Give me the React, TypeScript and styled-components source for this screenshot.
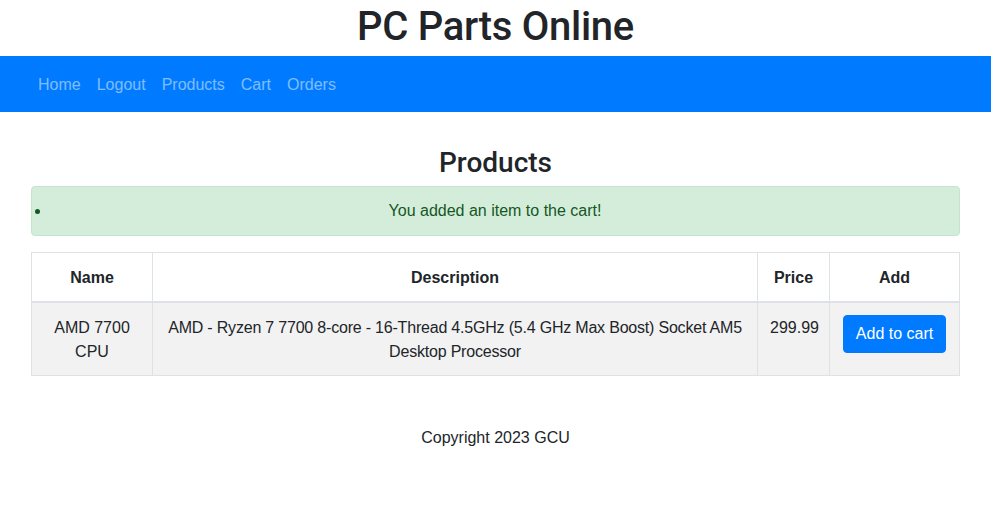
import React from "react";
import styled, { createGlobalStyle } from "styled-components";

const Global = createGlobalStyle`
  html, body { margin: 0; padding: 0; background: #fff; }
  body {
    font-family: "Liberation Sans", Arial, sans-serif;
    font-size: 16px;
    line-height: 1.5;
    color: #212529;
  }
  * { box-sizing: border-box; }
`;

const Page = styled.div`
  display: flex;
  flex-direction: column;
`;

const SiteTitle = styled.h1`
  margin: 0 0 5px;
  padding-top: 3px;
  font-family: Roboto, "Liberation Sans", sans-serif;
  font-size: 40px;
  font-weight: 500;
  line-height: 48px;
  letter-spacing: -0.3px;
  text-align: center;
`;

const NavBar = styled.nav`
  background: #007bff;
  height: 56px;
  display: flex;
  align-items: center;
  padding: 2px 23px 0 30px;
`;

const NavLink = styled.a`
  color: rgba(255, 255, 255, 0.5);
  text-decoration: none;
  padding: 8px;
  line-height: 24px;
`;

const Main = styled.main`
  padding: 34px 31px 0;
  display: flex;
  flex-direction: column;
`;

const Heading = styled.h2`
  margin: 0 0 6px;
  font-family: Roboto, "Liberation Sans", sans-serif;
  font-size: 28px;
  font-weight: 500;
  line-height: 34px;
  text-align: center;
`;

const Alert = styled.div`
  background: #d4edda;
  border: 1px solid #c3e6cb;
  color: #155724;
  border-radius: 4px;
  padding: 12px 20px;
  margin-bottom: 16px;
`;

const AlertList = styled.ul`
  margin: 0;
  padding: 0;
  list-style: disc outside;
`;

const AlertItem = styled.li`
  text-align: center;
  margin-left: -1px;
`;

const Table = styled.table`
  width: 100%;
  border-collapse: collapse;
  table-layout: fixed;
  margin-bottom: 16px;
`;

const Th = styled.th`
  border: 1px solid #dee2e6;
  border-bottom-width: 2px;
  padding: 13px 12px 11px;
  font-weight: 700;
  text-align: center;
  vertical-align: bottom;
`;

const Row = styled.tr`
  background: #f2f2f2;
`;

const Td = styled.td<{ $tight?: boolean }>`
  border: 1px solid #dee2e6;
  padding: 13px 12px 11px;
  text-align: center;
  vertical-align: top;
  letter-spacing: ${(p) => (p.$tight ? "-0.2px" : "normal")};
`;

const Button = styled.button`
  font-family: inherit;
  font-size: 16px;
  line-height: 24px;
  padding: 6px 12px;
  margin-top: -1px;
  color: #fff;
  background: #007bff;
  border: 1px solid #007bff;
  border-radius: 4px;
  cursor: pointer;
`;

const Footer = styled.footer`
  text-align: center;
  padding-top: 34px;
`;

export default function App() {
  return (
    <Page>
      <Global />
      <SiteTitle>PC Parts Online</SiteTitle>
      <NavBar>
        <NavLink href="#">Home</NavLink>
        <NavLink href="#">Logout</NavLink>
        <NavLink href="#">Products</NavLink>
        <NavLink href="#">Cart</NavLink>
        <NavLink href="#">Orders</NavLink>
      </NavBar>
      <Main>
        <Heading>Products</Heading>
        <Alert>
          <AlertList>
            <AlertItem>You added an item to the cart!</AlertItem>
          </AlertList>
        </Alert>
        <Table>
          <colgroup>
            <col style={{ width: 121 }} />
            <col style={{ width: 605 }} />
            <col style={{ width: 72 }} />
            <col style={{ width: 130 }} />
          </colgroup>
          <thead>
            <tr>
              <Th>Name</Th>
              <Th>Description</Th>
              <Th>Price</Th>
              <Th>Add</Th>
            </tr>
          </thead>
          <tbody>
            <Row>
              <Td>AMD 7700 CPU</Td>
              <Td $tight>
                AMD - Ryzen 7 7700 8-core - 16-Thread 4.5GHz (5.4 GHz Max Boost) Socket AM5 Desktop Processor
              </Td>
              <Td>299.99</Td>
              <Td>
                <Button>Add to cart</Button>
              </Td>
            </Row>
          </tbody>
        </Table>
        <Footer>Copyright 2023 GCU</Footer>
      </Main>
    </Page>
  );
}
